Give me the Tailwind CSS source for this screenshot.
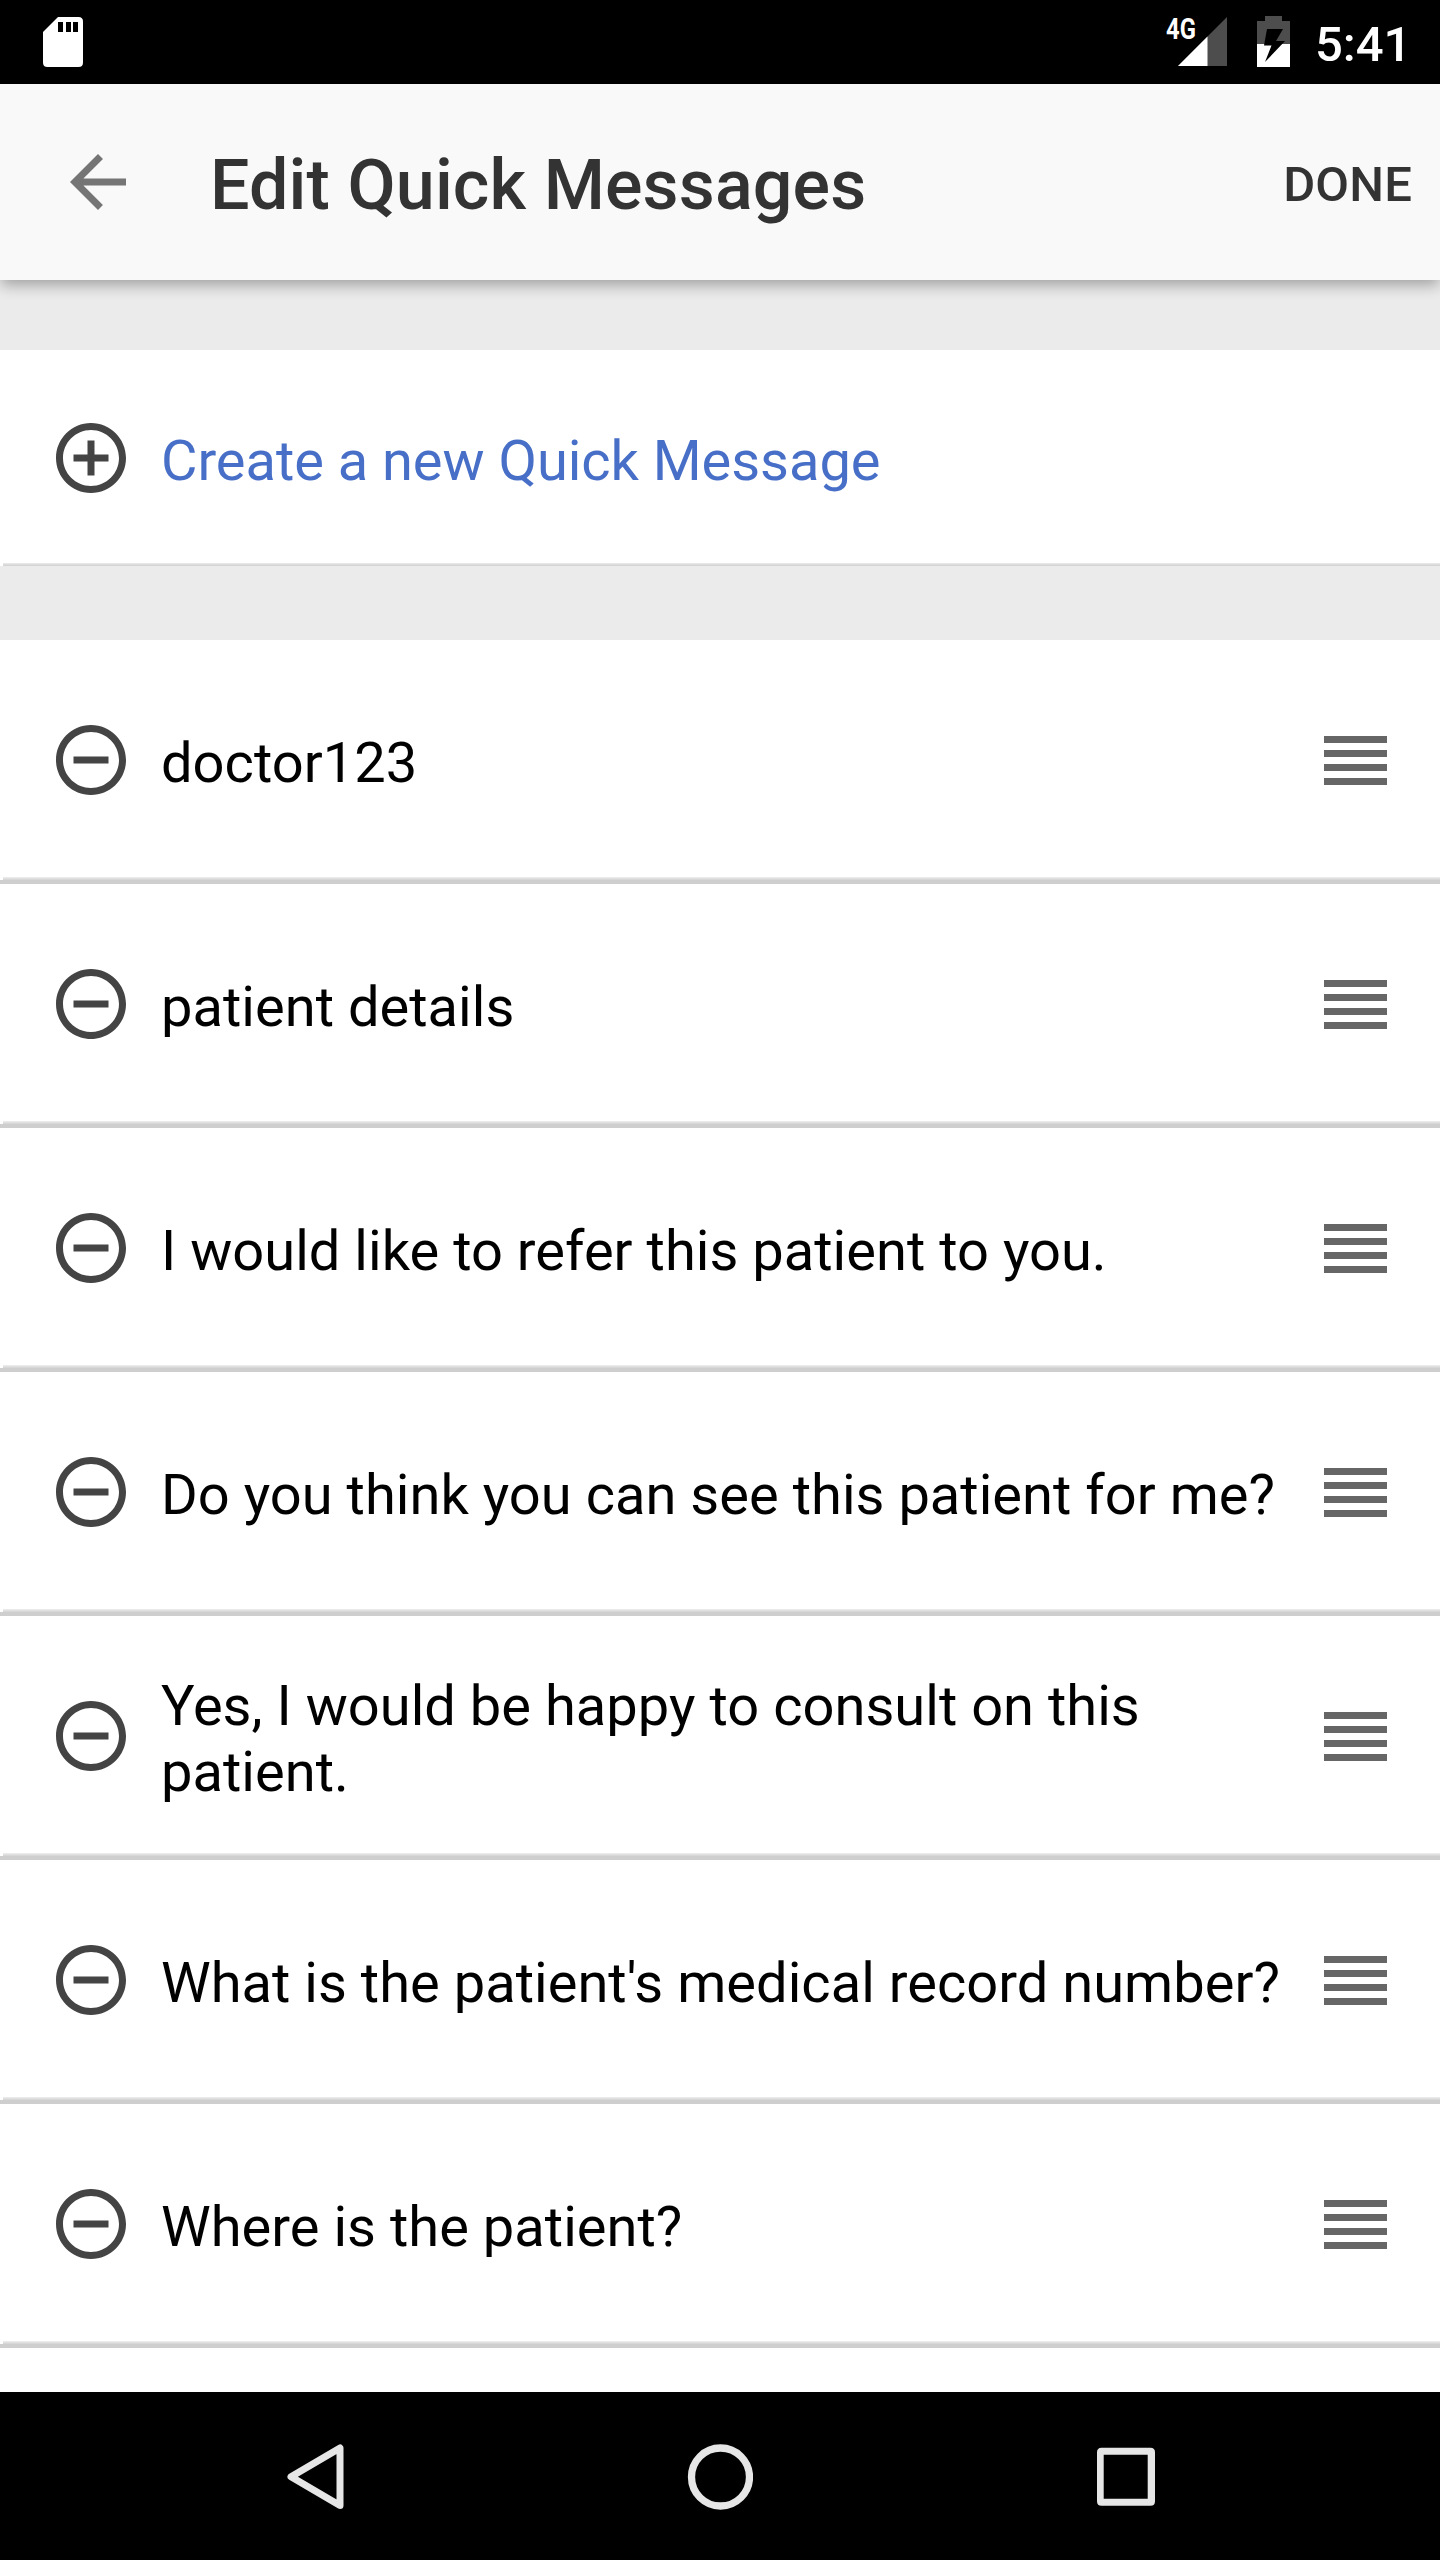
<!DOCTYPE html>
<html lang="en">
<head>
<meta charset="utf-8">
<title>Edit Quick Messages</title>
<script src="https://cdn.jsdelivr.net/npm/@tailwindcss/browser@4"></script>
</head>
<body class="bg-black">
<div class="flex h-[2560px] w-[1440px] flex-col overflow-hidden bg-[#ebebeb] font-['Roboto',sans-serif]">
  <header class="flex h-[84px] shrink-0 items-start bg-black text-white">
    <svg class="ml-[43px] mt-[17px] h-[50px] w-[40px]" viewBox="0 0 40 50">
      <path fill="#fff" d="M15 0H35.500Q40 0 40 4.500V45.500Q40 50 35.500 50H4.500Q0 50 0 45.500V15Z"/>
      <path fill="#000" d="M15 5h5v10h-5zM23 5h5v10h-5zM30 5h5v10h-5z"/>
    </svg>
    <span class="ml-auto mt-[12px] w-[31px] origin-left scale-x-[0.82] text-[29px] leading-[34px] font-bold">4G</span>
    <svg class="-ml-[20px] mt-[17px] h-[49px] w-[50px]" viewBox="0 0 50 49">
      <path fill="#4d4d4d" d="M50 0V49H1Z"/>
      <path fill="#fff" d="M30.500 19.500V49H1Z"/>
    </svg>
    <svg class="ml-[30px] mt-[16px] h-[51px] w-[33px]" viewBox="0 0 33 51">
      <path fill="#4d4d4d" d="M8 0H25V5H33V28H0V5H8Z"/>
      <path fill="#fff" d="M0 28H33V51H0Z"/>
      <path fill="#000" d="M10 13H26L19 25H28L8 46L14.500 29.500H7Z"/>
    </svg>
    <span class="ml-[25px] mr-[32px] mt-[16px] w-[93px] text-[49px] leading-[57px] font-medium">5:41</span>
  </header>

  <div class="relative flex h-[196px] shrink-0 items-center bg-[#f9f9f9] text-[#333] shadow-[0_6px_14px_-1px_rgba(0,0,0,0.32)]">
    <svg class="ml-[56px] size-[84px]" viewBox="0 0 24 24" fill="#757575"><path d="M20 11H7.830l5.590-5.590L12 4l-8 8 8 8 1.410-1.410L7.830 13H20v-2z"/></svg>
    <h1 class="ml-[70px] pt-[6px] text-[70px] leading-[82px] font-medium tracking-[0.12px]">Edit Quick Messages</h1>
    <button class="ml-auto mr-[28px] pt-[4px] text-[49px] leading-[57px] font-medium tracking-[0.15px]">DONE</button>
  </div>

  <section class="mt-[70px] flex h-[216px] shrink-0 flex-col bg-white">
    <div class="flex h-[213px] items-center pl-[49px] pt-[3px]">
      <svg class="size-[84px]" viewBox="0 0 24 24" fill="#444"><path d="M13 7h-2v4H7v2h4v4h2v-4h4v-2h-4V7zm-1-5C6.480 2 2 6.480 2 12s4.480 10 10 10 10-4.480 10-10S17.520 2 12 2zm0 18c-4.410 0-8-3.590-8-8s3.590-8 8-8 8 3.590 8 8-3.590 8-8 8z"/></svg>
      <a class="ml-[28px] pt-[6px] text-[56px] leading-[66px] tracking-[-0.04px] text-[#486fc7]">Create a new Quick Message</a>
    </div>
    <div class="ml-[3px] h-[3px] bg-linear-to-b from-[#ebebeb] to-[#cfcfcf]"></div>
  </section>

  <main id="list" class="mt-[74px] flex h-[1752px] shrink-0 flex-col overflow-hidden bg-white"></main>

  <nav class="flex h-[168px] shrink-0 items-center bg-black pl-[287px] pt-px">
    <svg class="h-[66px] w-[57px]" viewBox="0 0 57 66"><path fill="none" stroke="#e6e6e6" stroke-width="7" stroke-linejoin="round" d="M53 4V61.500L4 32.700Z"/></svg>
    <svg class="ml-[343px] size-[66px]" viewBox="0 0 66 66"><circle cx="33.500" cy="33" r="29" fill="none" stroke="#e6e6e6" stroke-width="7.300"/></svg>
    <svg class="ml-[343px] size-[60px]" viewBox="0 0 60 60"><path fill="#e6e6e6" fill-rule="evenodd" d="M6 .7H54.500Q59 .7 59 5.200V54.300Q59 58.800 54.500 58.800H5.500Q1 58.800 1 54.300V5.200Q1 .7 5.500 .7ZM7.700 7.700V51.700H51.700V7.700Z"/></svg>
  </nav>
</div>

<template id="row">
  <article class="h-[244px] shrink-0 border-b-4 border-[#cecece]">
    <div class="flex h-[237px] items-center pl-[49px] pt-[3px]">
      <svg class="size-[84px] shrink-0" viewBox="0 0 24 24" fill="#444"><path d="M7 11v2h10v-2H7zm5-9C6.480 2 2 6.480 2 12s4.480 10 10 10 10-4.480 10-10S17.520 2 12 2zm0 18c-4.410 0-8-3.590-8-8s3.590-8 8-8 8 3.590 8 8-3.590 8-8 8z"/></svg>
      <p class="ml-[28px] w-[1135px] shrink-0 pt-[6px] text-[56px] leading-[66px] tracking-[0.03px] text-black"></p>
      <div class="ml-[28px] mt-px flex w-[63px] flex-col gap-[7px]">
        <i class="h-[7px] bg-[#666]"></i><i class="h-[7px] bg-[#666]"></i><i class="h-[7px] bg-[#666]"></i><i class="h-[7px] bg-[#666]"></i>
      </div>
    </div>
    <div class="ml-[3px] h-[3px] bg-linear-to-b from-[#efefef] to-[#d2d2d2]"></div>
  </article>
</template>
<script>
  const messages = [
    "doctor123",
    "patient details",
    "I would like to refer this patient to you.",
    "Do you think you can see this patient for me?",
    "Yes, I would be happy to consult on this patient.",
    "What is the patient's medical record number?",
    "Where is the patient?"
  ];
  const list = document.getElementById("list");
  const row = document.getElementById("row");
  for (const message of messages) {
    const item = row.content.cloneNode(true);
    item.querySelector("p").textContent = message;
    list.append(item);
  }
</script>
</body>
</html>
